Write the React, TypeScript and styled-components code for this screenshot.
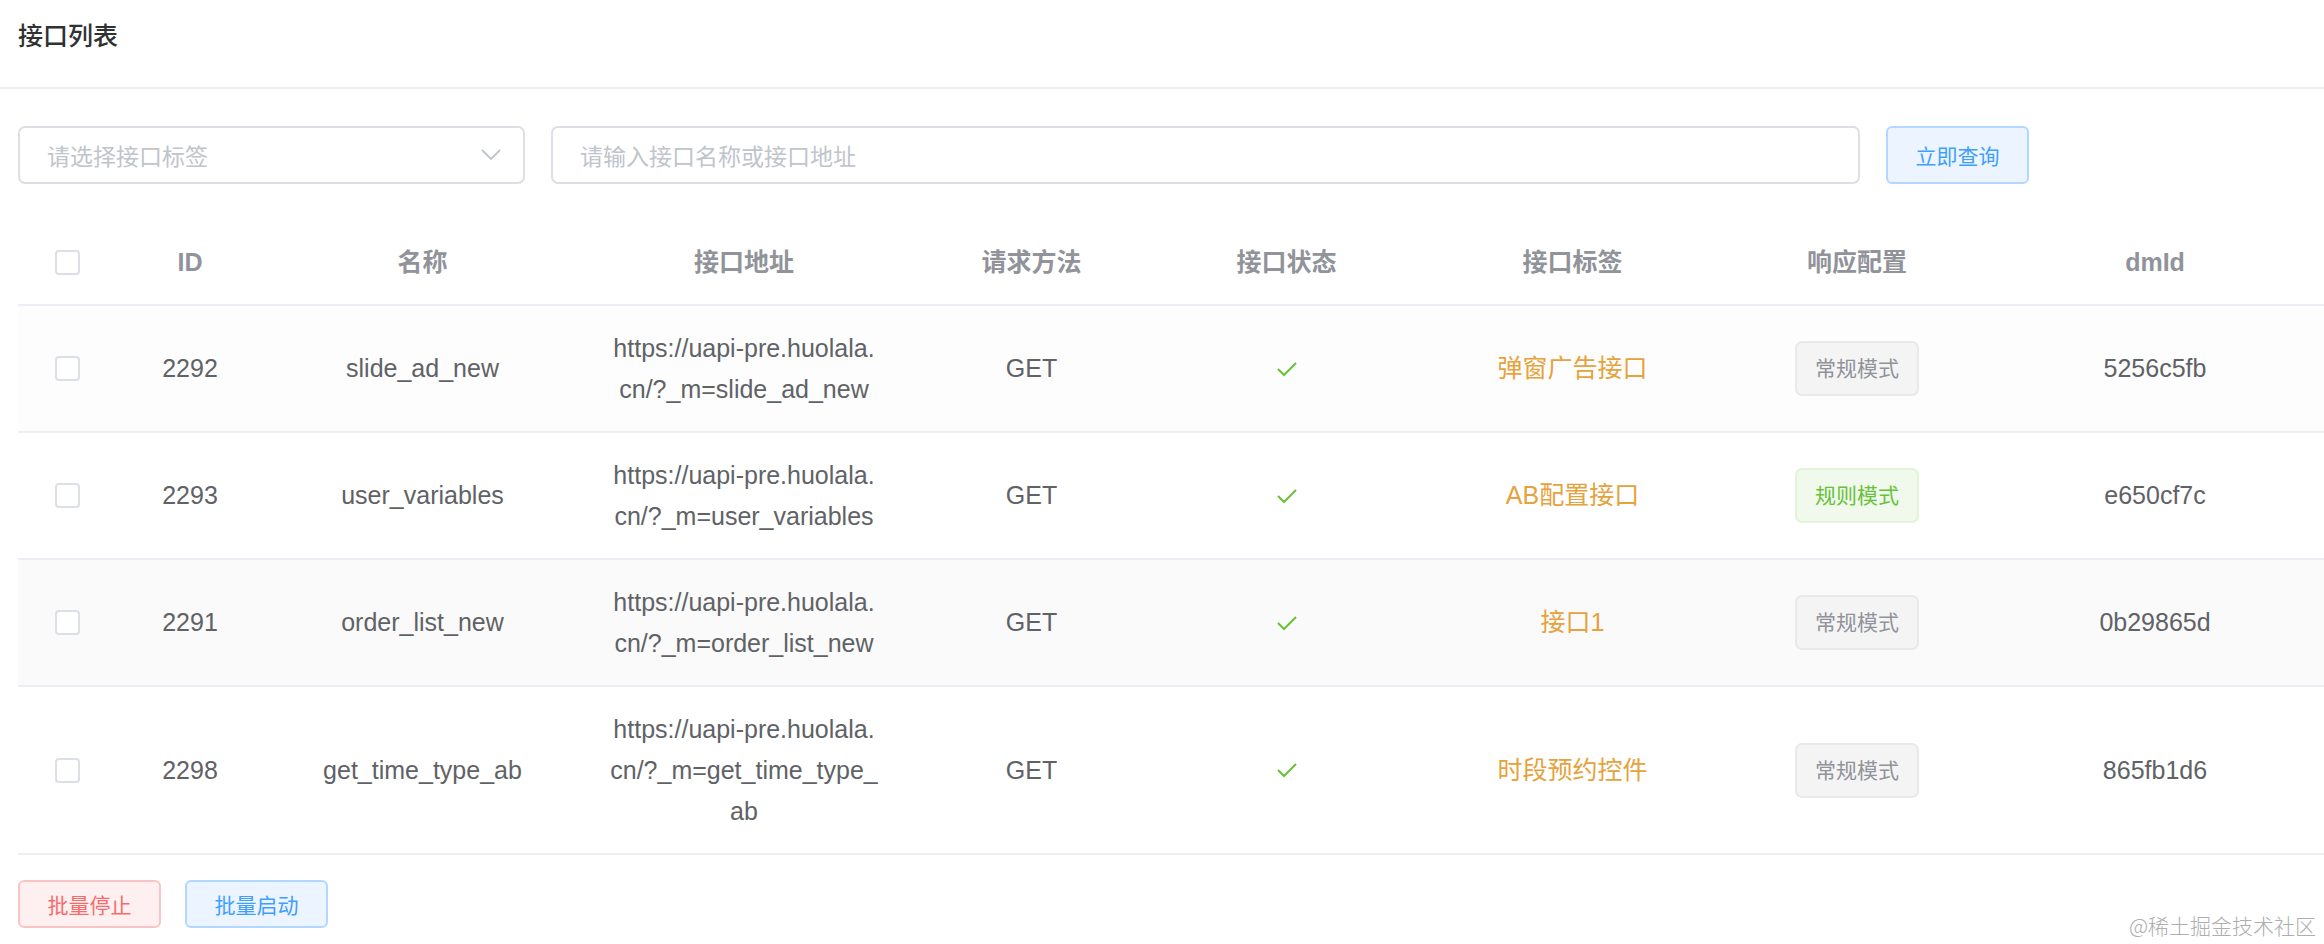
import React from "react";
import styled, { createGlobalStyle } from "styled-components";

const GlobalStyle = createGlobalStyle`
  html, body { margin: 0; padding: 0; background: #fff; }
  body {
    font-family: "Liberation Sans", "Noto Sans CJK SC", sans-serif;
    color: #606266;
    -webkit-font-smoothing: antialiased;
  }
  * { box-sizing: border-box; }
`;

const Page = styled.div`
  position: relative;
  width: 2324px;
  height: 944px;
  overflow: hidden;
  background: #fff;
`;

const Header = styled.div`
  height: 89px;
  padding: 16px 18px 0;
  border-bottom: 2px solid #eef0f3;
`;

const Title = styled.h1`
  margin: 0;
  font-size: 25px;
  line-height: 41px;
  font-weight: 500;
  color: #303133;
`;

const Body = styled.div`
  padding: 37px 0 0 18px;
`;

const SearchBar = styled.div`
  display: flex;
  align-items: center;
  gap: 26px;
  height: 58px;
`;

const Field = styled.div<{ $w: number }>`
  width: ${(p) => p.$w}px;
  height: 58px;
  border: 2px solid #dcdfe6;
  border-radius: 7px;
  display: flex;
  align-items: center;
  justify-content: space-between;
  padding: 0 22px 0 27px;
  background: #fff;
`;

const Placeholder = styled.span`
  font-size: 23px;
  color: #c0c4cc;
`;

const PlainButton = styled.button<{ $tone: "primary" | "danger"; $h: number }>`
  height: ${(p) => p.$h}px;
  width: 143px;
  border-radius: 6px;
  font-family: inherit;
  font-size: 21px;
  cursor: pointer;
  background: ${(p) => (p.$tone === "primary" ? "#ecf5ff" : "#fef0f0")};
  border: 2px solid ${(p) => (p.$tone === "primary" ? "#b3d8ff" : "#fbc4c4")};
  color: ${(p) => (p.$tone === "primary" ? "#409eff" : "#f56c6c")};
  padding: 0;
`;

const Table = styled.div`
  margin-top: 37px;
  width: 2306px;
`;

const COLS = "98px 148px 317px 326px 249px 261px 311px 258px 338px";

const Row = styled.div<{ $bg?: string }>`
  display: grid;
  grid-template-columns: ${COLS};
  align-items: center;
  border-bottom: 2px solid #ebeef5;
  background: ${(p) => p.$bg || "#fff"};
`;

const Cell = styled.div<{ $head?: boolean; $wide?: boolean }>`
  padding: ${(p) => (p.$head ? "21px" : "21.5px")} ${(p) => (p.$wide ? 28 : 18)}px;
  text-align: center;
  font-size: 25px;
  line-height: 41px;
  color: ${(p) => (p.$head ? "#909399" : "#606266")};
  font-weight: ${(p) => (p.$head ? 700 : 400)};
  word-break: break-all;
  display: flex;
  justify-content: center;
  align-items: center;
`;

const UrlText = styled.span`
  display: block;
  width: 270px;
  text-align: center;
  word-break: break-all;
`;

const Checkbox = styled.span`
  display: inline-block;
  width: 25px;
  height: 25px;
  border: 2px solid #dcdfe6;
  border-radius: 4px;
  background: #fff;
`;

const LabelText = styled.span`
  color: #e6a23c;
`;

const Tag = styled.span<{ $type: "info" | "success" }>`
  display: inline-flex;
  align-items: center;
  justify-content: center;
  height: 55px;
  width: 124px;
  border-radius: 7px;
  font-size: 21px;
  background: ${(p) => (p.$type === "success" ? "#f0f9eb" : "#f4f4f5")};
  border: 2px solid ${(p) => (p.$type === "success" ? "#e1f3d8" : "#e9e9eb")};
  color: ${(p) => (p.$type === "success" ? "#67c23a" : "#909399")};
`;

const Footer = styled.div`
  display: flex;
  gap: 24px;
  margin-top: 25px;
`;

const Watermark = styled.div`
  position: absolute;
  right: 8px;
  bottom: 4px;
  font-size: 21px;
  color: #aeaeae;
  font-family: "Noto Sans CJK SC", sans-serif;
  font-weight: 300;
`;

const Check = () => (
  <svg width="22" height="16" viewBox="0 0 22 16" fill="none">
    <polyline points="2,8 8,14 20,2" stroke="#67c23a" strokeWidth="2" />
  </svg>
);

const Chevron = () => (
  <svg width="20" height="12" viewBox="0 0 20 12" fill="none">
    <polyline points="1,1 10,10 19,1" stroke="#c0c4cc" strokeWidth="1.8" />
  </svg>
);

type Item = {
  id: number;
  name: string;
  url: string;
  label: string;
  mode: "常规模式" | "规则模式";
  dmId: string;
  bg?: string;
};

const data: Item[] = [
  { id: 2292, name: "slide_ad_new", url: "https://uapi-pre.huolala.cn/?_m=slide_ad_new", label: "弹窗广告接口", mode: "常规模式", dmId: "5256c5fb", bg: "#fdfdfd" },
  { id: 2293, name: "user_variables", url: "https://uapi-pre.huolala.cn/?_m=user_variables", label: "AB配置接口", mode: "规则模式", dmId: "e650cf7c" },
  { id: 2291, name: "order_list_new", url: "https://uapi-pre.huolala.cn/?_m=order_list_new", label: "接口1", mode: "常规模式", dmId: "0b29865d", bg: "#fafafa" },
  { id: 2298, name: "get_time_type_ab", url: "https://uapi-pre.huolala.cn/?_m=get_time_type_ab", label: "时段预约控件", mode: "常规模式", dmId: "865fb1d6" },
];

const heads = ["ID", "名称", "接口地址", "请求方法", "接口状态", "接口标签", "响应配置", "dmId"];

export default function App() {
  return (
    <Page>
      <GlobalStyle />
      <Header>
        <Title>接口列表</Title>
      </Header>
      <Body>
        <SearchBar>
          <Field $w={507}>
            <Placeholder>请选择接口标签</Placeholder>
            <Chevron />
          </Field>
          <Field $w={1309}>
            <Placeholder>请输入接口名称或接口地址</Placeholder>
          </Field>
          <PlainButton $tone="primary" $h={58}>立即查询</PlainButton>
        </SearchBar>
        <Table>
          <Row>
            <Cell $head>
              <Checkbox />
            </Cell>
            {heads.map((h) => (
              <Cell $head key={h}>
                {h}
              </Cell>
            ))}
          </Row>
          {data.map((d) => (
            <Row key={d.id} $bg={d.bg}>
              <Cell>
                <Checkbox />
              </Cell>
              <Cell>{d.id}</Cell>
              <Cell>{d.name}</Cell>
              <Cell $wide>
                <UrlText>{d.url}</UrlText>
              </Cell>
              <Cell>GET</Cell>
              <Cell>
                <Check />
              </Cell>
              <Cell>
                <LabelText>{d.label}</LabelText>
              </Cell>
              <Cell>
                <Tag $type={d.mode === "规则模式" ? "success" : "info"}>{d.mode}</Tag>
              </Cell>
              <Cell>{d.dmId}</Cell>
            </Row>
          ))}
        </Table>
        <Footer>
          <PlainButton $tone="danger" $h={48}>批量停止</PlainButton>
          <PlainButton $tone="primary" $h={48}>批量启动</PlainButton>
        </Footer>
      </Body>
      <Watermark>@稀土掘金技术社区</Watermark>
    </Page>
  );
}
